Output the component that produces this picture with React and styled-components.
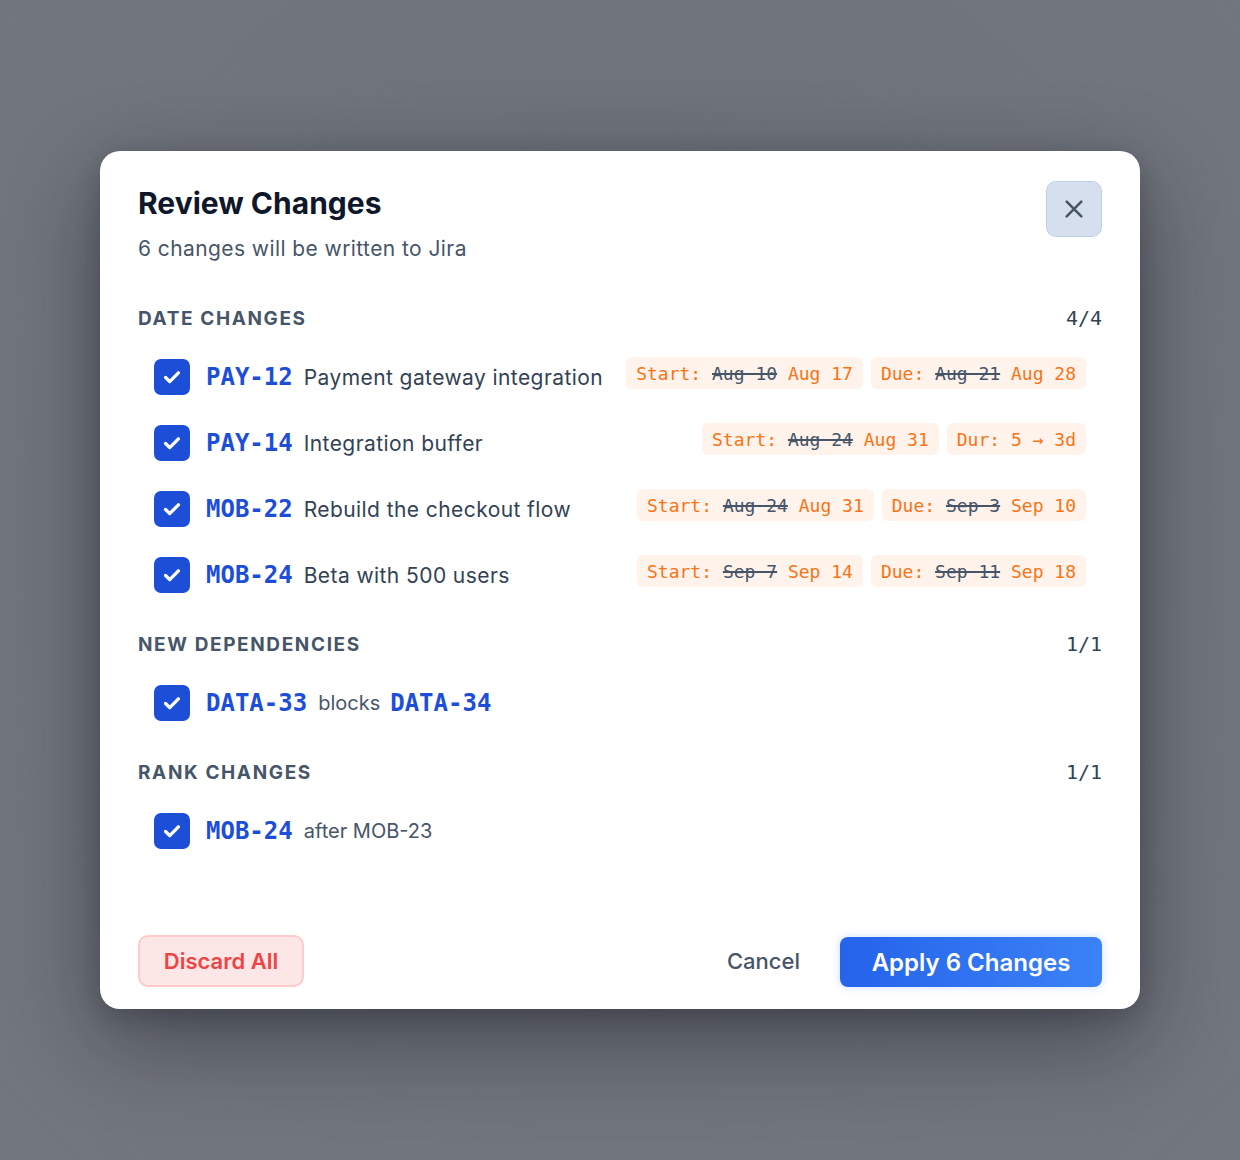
import React from "react";
import styled, { createGlobalStyle } from "styled-components";

const Global = createGlobalStyle`
  html, body { margin: 0; padding: 0; }
  body {
    background: #6f737b;
    font-family: Inter, "Noto Sans", sans-serif;
    -webkit-font-smoothing: antialiased;
  }
`;

const Backdrop = styled.div`
  width: 1240px;
  height: 1160px;
  display: flex;
  align-items: center;
  justify-content: center;
  background: radial-gradient(ellipse at 50% 45%, #6a6e76 0%, #70747c 60%, #72767e 100%);
`;

const Modal = styled.div`
  width: 1040px;
  height: 858px;
  box-sizing: border-box;
  background: #ffffff;
  border-radius: 20px;
  padding: 30px 38px 22px;
  display: flex;
  flex-direction: column;
  box-shadow: 0 30px 90px rgba(20, 22, 30, 0.45), 0 8px 24px rgba(20, 22, 30, 0.2);
`;

const Header = styled.div`
  display: flex;
  justify-content: space-between;
  align-items: flex-start;
`;

const Title = styled.h2`
  margin: 3px 0 0;
  font-size: 30px;
  line-height: 38px;
  font-weight: 700;
  color: #0f172a;
`;

const Subtitle = styled.p`
  margin: 13px 0 0;
  font-size: 21px;
  line-height: 28px;
  letter-spacing: 0.02em;
  color: #475569;
`;

const CloseButton = styled.button`
  width: 56px;
  height: 56px;
  border-radius: 10px;
  background: #d5dfed;
  border: 1.5px dotted #a9bfe6;
  display: flex;
  align-items: center;
  justify-content: center;
  padding: 0;
  cursor: pointer;
`;

const Body = styled.div`
  flex: 1;
  margin-top: 43px;
  display: flex;
  flex-direction: column;
`;

const Section = styled.section`
  & + & {
    margin-top: 24px;
  }
`;

const SectionHead = styled.div`
  display: flex;
  justify-content: space-between;
  align-items: center;
  height: 24px;
  margin-bottom: 14px;
`;

const SectionTitle = styled.span`
  font-size: 19px;
  font-weight: 700;
  letter-spacing: 0.085em;
  color: #475569;
  text-transform: uppercase;
`;

const Count = styled.span`
  font-family: "DejaVu Sans Mono", "Liberation Mono", monospace;
  font-size: 20px;
  color: #334155;
`;

const Row = styled.div`
  display: flex;
  align-items: center;
  height: 66px;
  padding: 0 16px;
`;

const Check = styled.span`
  width: 36px;
  height: 36px;
  flex: none;
  border-radius: 7px;
  background: #1d4ed8;
  display: flex;
  align-items: center;
  justify-content: center;
  margin-right: 16px;
`;

const Key = styled.span`
  font-family: "DejaVu Sans Mono", "Liberation Mono", monospace;
  font-weight: 700;
  font-size: 24px;
  color: #1d4ed8;
  margin-right: ${(p) => p.$gap || 11}px;
  margin-left: ${(p) => p.$lead || 0}px;
`;

const Summary = styled.span`
  font-size: ${(p) => (p.$small ? 20 : 21)}px;
  letter-spacing: ${(p) => (p.$small ? "0" : "0.02em")};
  color: ${(p) => (p.$small ? "#475569" : "#334155")};
  white-space: nowrap;
`;

const Chips = styled.div`
  margin-left: auto;
  display: flex;
  gap: 8px;
  margin-bottom: 8px;
`;

const Chip = styled.span`
  height: 32px;
  padding: 0 10px;
  border-radius: 6px;
  background: #fff3ec;
  display: flex;
  align-items: center;
  font-family: "DejaVu Sans Mono", "Liberation Mono", monospace;
  font-size: 18px;
  color: #f97316;
  white-space: pre;
`;

const Old = styled.s`
  color: #475569;
  text-decoration-thickness: 2px;
`;

const Footer = styled.div`
  display: flex;
  align-items: center;
`;

const DiscardButton = styled.button`
  width: 166px;
  height: 52px;
  border-radius: 10px;
  border: 2px solid #fecaca;
  background: #fde6e6;
  color: #ef4444;
  font-family: Inter, sans-serif;
  font-size: 22px;
  font-weight: 600;
  cursor: pointer;
`;

const CancelButton = styled.button`
  margin-left: auto;
  background: none;
  border: none;
  padding: 0 20px;
  height: 50px;
  color: #475569;
  font-family: Inter, sans-serif;
  font-size: 22px;
  font-weight: 500;
  margin-right: 20px;
  cursor: pointer;
`;

const ApplyButton = styled.button`
  width: 262px;
  height: 50px;
  margin-top: 2px;
  border-radius: 8px;
  border: none;
  background: linear-gradient(90deg, #2563eb 0%, #3b82f6 100%);
  color: #ffffff;
  font-family: Inter, sans-serif;
  font-size: 24px;
  font-weight: 600;
  box-shadow: 0 0 10px rgba(59, 130, 246, 0.25);
  cursor: pointer;
`;

const CheckIcon = () => (
  <svg width="22" height="22" viewBox="0 0 24 24" fill="none" stroke="#fff" strokeWidth="3.6" strokeLinecap="round" strokeLinejoin="round">
    <path d="M5 12.5l4.5 4.5L19 7.5" />
  </svg>
);

const XIcon = () => (
  <svg width="22" height="22" viewBox="0 0 24 24" fill="none" stroke="#475569" strokeWidth="2.8" strokeLinecap="round">
    <path d="M4 4l16 16M20 4L4 20" />
  </svg>
);

const dateRows = [
  { key: "PAY-12", title: "Payment gateway integration", chips: [["Start: ", "Aug 10", " Aug 17"], ["Due: ", "Aug 21", " Aug 28"]] },
  { key: "PAY-14", title: "Integration buffer", chips: [["Start: ", "Aug 24", " Aug 31"], ["Dur: 5 \u2192 3d"]] },
  { key: "MOB-22", title: "Rebuild the checkout flow", chips: [["Start: ", "Aug 24", " Aug 31"], ["Due: ", "Sep 3", " Sep 10"]] },
  { key: "MOB-24", title: "Beta with 500 users", chips: [["Start: ", "Sep 7", " Sep 14"], ["Due: ", "Sep 11", " Sep 18"]] },
];

export default function App() {
  return (
    <>
      <Global />
      <Backdrop>
        <Modal>
          <Header>
            <div>
              <Title>Review Changes</Title>
              <Subtitle>6 changes will be written to Jira</Subtitle>
            </div>
            <CloseButton aria-label="Close">
              <XIcon />
            </CloseButton>
          </Header>
          <Body>
            <Section>
              <SectionHead>
                <SectionTitle>Date changes</SectionTitle>
                <Count>4/4</Count>
              </SectionHead>
              {dateRows.map((r) => (
                <Row key={r.key}>
                  <Check><CheckIcon /></Check>
                  <Key>{r.key}</Key>
                  <Summary>{r.title}</Summary>
                  <Chips>
                    {r.chips.map((c, i) => (
                      <Chip key={i}>
                        {c.length === 1 ? c[0] : (<>{c[0]}<Old>{c[1]}</Old>{c[2]}</>)}
                      </Chip>
                    ))}
                  </Chips>
                </Row>
              ))}
            </Section>
            <Section>
              <SectionHead>
                <SectionTitle>New dependencies</SectionTitle>
                <Count>1/1</Count>
              </SectionHead>
              <Row>
                <Check><CheckIcon /></Check>
                <Key>DATA-33</Key>
                <Summary $small>blocks</Summary>
                <Key $lead={10}>DATA-34</Key>
              </Row>
            </Section>
            <Section>
              <SectionHead>
                <SectionTitle>Rank changes</SectionTitle>
                <Count>1/1</Count>
              </SectionHead>
              <Row>
                <Check><CheckIcon /></Check>
                <Key>MOB-24</Key>
                <Summary $small>after MOB-23</Summary>
              </Row>
            </Section>
          </Body>
          <Footer>
            <DiscardButton>Discard All</DiscardButton>
            <CancelButton>Cancel</CancelButton>
            <ApplyButton>Apply 6 Changes</ApplyButton>
          </Footer>
        </Modal>
      </Backdrop>
    </>
  );
}
